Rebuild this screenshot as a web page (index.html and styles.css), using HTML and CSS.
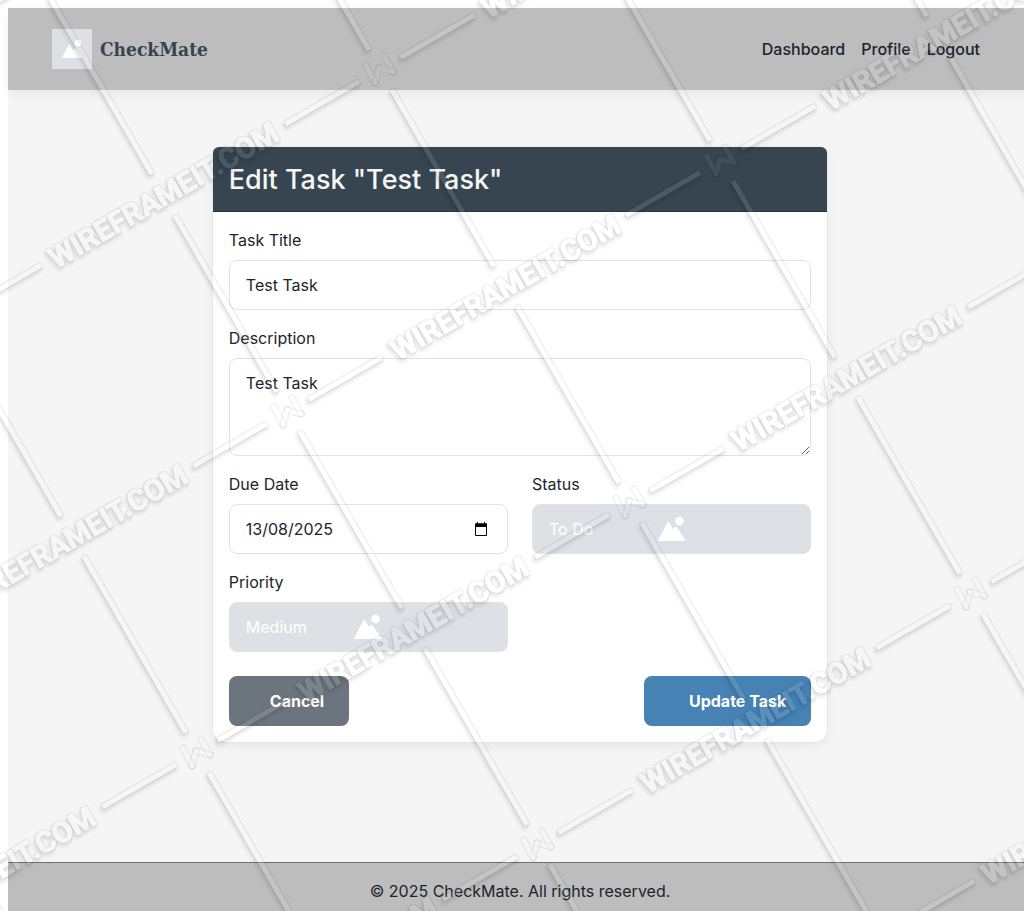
FILE: index.html
```html
<!DOCTYPE html>
<html lang="en">
<head>
<meta charset="utf-8">
<meta name="viewport" content="width=device-width, initial-scale=1">
<title>Edit Task - CheckMate</title>
<link rel="stylesheet" href="styles.css">
</head>
<body>
<div class="app">
  <header class="site-header">
    <div class="container">
      <a class="brand" href="#">
        <svg class="brand-logo" viewBox="0 0 40 40" aria-hidden="true">
          <path d="M10.500 29q-.8 0-.4-.8L16.500 16.500q1-1.800 2 0l3 5 1.200-1.500q1-1 1.800.3L30 28q.5 1-.6 1z" fill="#fff"/>
          <circle cx="26" cy="14" r="3.200" fill="#fff"/>
        </svg>
        <span>CheckMate</span>
      </a>
      <nav class="nav">
        <a href="#">Dashboard</a>
        <a href="#">Profile</a>
        <a href="#">Logout</a>
      </nav>
    </div>
  </header>

  <main class="main">
    <section class="card">
      <h1 class="card-header">Edit Task "Test Task"</h1>
      <form class="card-body">
        <div class="field">
          <label for="title">Task Title</label>
          <input class="control" id="title" type="text" value="Test Task">
        </div>
        <div class="field">
          <label for="description">Description</label>
          <textarea class="control" id="description" rows="3">Test Task</textarea>
        </div>
        <div class="row">
          <div class="field">
            <label for="due">Due Date</label>
            <div class="stack">
              <input class="control" id="due" type="text" inputmode="numeric" value="13/08/2025">
              <svg class="calendar" viewBox="0 0 14 14" aria-hidden="true">
                <path d="M3.500 0v2M10.500 0v2" stroke="#000"/>
                <path d="M1.500 2h11v11.500h-11z" fill="none" stroke="#000"/>
                <path d="M1 1.500h12V5H1z"/>
              </svg>
            </div>
          </div>
          <div class="field">
            <label for="status">Status</label>
            <div class="stack">
              <select class="control select" id="status"><option>To Do</option><option>In Progress</option><option>Done</option></select>
              <svg class="picture" viewBox="0 0 28 26" aria-hidden="true">
                <path d="M1 25q-1.200 0-.6-1.200L9 7.200q1.400-2.400 2.800 0L15 13l1.600-1.800q1.200-1.300 2.300.2l8 12.200q.8 1.400-.7 1.400z"/>
                <circle cx="21.500" cy="5" r="4.200"/>
              </svg>
            </div>
          </div>
          <div class="field">
            <label for="priority">Priority</label>
            <div class="stack">
              <select class="control select" id="priority"><option>Medium</option><option>Low</option><option>High</option></select>
              <svg class="picture" viewBox="0 0 28 26" aria-hidden="true">
                <path d="M1 25q-1.200 0-.6-1.200L9 7.200q1.400-2.400 2.800 0L15 13l1.600-1.800q1.200-1.300 2.300.2l8 12.200q.8 1.400-.7 1.400z"/>
                <circle cx="21.500" cy="5" r="4.200"/>
              </svg>
            </div>
          </div>
        </div>
        <div class="actions">
          <button class="btn btn-cancel" type="button">Cancel</button>
          <button class="btn btn-update" type="submit">Update Task</button>
        </div>
      </form>
    </section>
  </main>

  <footer class="site-footer">© 2025 CheckMate. All rights reserved.</footer>
</div>

<svg class="watermark" aria-hidden="true">
  <defs>
    <filter id="emboss" filterUnits="userSpaceOnUse" x="-20" y="-20" width="3000" height="3000" color-interpolation-filters="sRGB">
      <feMorphology in="SourceAlpha" operator="dilate" radius="1" result="wide"/>
      <feFlood flood-color="#000" flood-opacity=".06"/>
      <feComposite in2="wide" operator="in"/>
      <feComposite in2="SourceAlpha" operator="out" result="ring"/>
      <feOffset in="wide" dx="-1" dy="3" result="moved"/>
      <feGaussianBlur in="moved" stdDeviation="1.500" result="soft"/>
      <feFlood flood-color="#000" flood-opacity=".08"/>
      <feComposite in2="soft" operator="in"/>
      <feComposite in2="SourceAlpha" operator="out" result="shadow"/>
      <feFlood flood-color="#fff" flood-opacity=".11"/>
      <feComposite in2="SourceAlpha" operator="in" result="face"/>
      <feMerge><feMergeNode in="shadow"/><feMergeNode in="ring"/><feMergeNode in="face"/></feMerge>
    </filter>
    <g id="motif">
      <g transform="rotate(-30)" fill="#fff">
        <path d="M24-3h85v5H24zM-109-3h85v5h-85zM-2 23h5v204h-5zM-2-227h5v204h-5z"/>
        <text class="mark-text" x="0" y="261" text-anchor="middle">WIREFRAMEIT.COM</text>
      </g>
    </g>
    <g id="letter" fill="none" stroke="#000" stroke-opacity=".08">
      <rect x="-3" y="-3" width="26" height="6" rx="3" transform="translate(-14 -5) rotate(63)"/>
      <rect x="-3" y="-3" width="22" height="6" rx="3" transform="translate(-5 13) rotate(-75)"/>
      <rect x="-3" y="-3" width="21" height="6" rx="3" transform="translate(-1 -2) rotate(16)"/>
      <rect x="-3" y="-3" width="24" height="6" rx="3" transform="translate(4 -14) rotate(60)"/>
      <path d="M-14-5-5 13-1-2 13 2 4-14" stroke="#fff" stroke-opacity=".06" stroke-width="5" stroke-linecap="round" stroke-linejoin="round"/>
    </g>
  </defs>
  <g filter="url(#emboss)">
    <use href="#motif" x="471" y="-272"/><use href="#motif" x="813" y="-180"/>
    <use href="#motif" x="38" y="-22"/><use href="#motif" x="380" y="70"/><use href="#motif" x="721" y="161"/><use href="#motif" x="1063" y="253"/>
    <use href="#motif" x="-53" y="320"/><use href="#motif" x="288" y="412"/><use href="#motif" x="630" y="503"/><use href="#motif" x="971" y="594"/>
    <use href="#motif" x="-145" y="662"/><use href="#motif" x="197" y="753"/><use href="#motif" x="538" y="845"/><use href="#motif" x="880" y="936"/>
    <use href="#motif" x="105" y="1095"/>
  </g>
  <use href="#letter" x="380" y="70"/><use href="#letter" x="721" y="161"/>
  <use href="#letter" x="288" y="412"/><use href="#letter" x="630" y="503"/><use href="#letter" x="971" y="594"/>
  <use href="#letter" x="197" y="753"/><use href="#letter" x="538" y="845"/>
</svg>
</body>
</html>
```
FILE: styles.css
```css
* { box-sizing: border-box; }

body {
  margin: 0;
  padding: 8px 0 0 8px;
  overflow-x: hidden;
  background: #fff;
  color: #212529;
  font: 16px/24px Inter, sans-serif;
}

.app {
  display: flex;
  flex-direction: column;
  width: 100vw;
  min-height: calc(100vh - 8px);
  background: #f5f5f5;
}

.site-header {
  padding: 21px 0;
  background: #bdbdbd;
  box-shadow: 0 4px 12px rgba(0, 0, 0, .06);
}

.container {
  display: flex;
  align-items: center;
  justify-content: space-between;
  max-width: 960px;
  margin: 0 auto;
  padding: 0 20px 0 12px;
}

.brand {
  display: flex;
  align-items: center;
  gap: 8px;
  color: #36454f;
  font: bold 19px/24px "DejaVu Serif Condensed", "DejaVu Serif", serif;
  text-decoration: none;
}

.brand-logo {
  width: 40px;
  height: 40px;
  background: #dfe0e6;
}

.nav { display: flex; gap: 16px; }

.nav a {
  color: #1a242c;
  font-weight: 500;
  text-decoration: none;
}

.main {
  flex: 1;
  padding: 57px 0 120px;
}

.card {
  width: 60%;
  margin: 0 auto;
  background: #fff;
  border-radius: 6px 6px 12px 12px;
  box-shadow: 0 4px 12px rgba(0, 0, 0, .06), 0 0 1px rgba(0, 0, 0, .2);
}

.card-header {
  margin: 0;
  padding: 16px 16px 14px;
  background: #36454f;
  border-bottom: 1px solid #2b373f;
  border-radius: 6px 6px 0 0;
  color: #f5f5f5;
  font-size: 27px;
  font-weight: 500;
  line-height: 34px;
}

.card-body { padding: 16px; }

.field { margin-bottom: 16px; }

.field label {
  display: block;
  margin-bottom: 8px;
}

.control {
  display: block;
  width: 100%;
  margin: 0;
  padding: 12px 16px;
  border: 1px solid #e2e3e4;
  border-radius: 8px;
  background: #fff;
  color: #212529;
  font: inherit;
}

textarea.control { resize: vertical; }

.row {
  display: grid;
  grid-template-columns: 1fr 1fr;
  column-gap: 24px;
}

.stack { display: grid; align-items: center; }
.stack > * { grid-area: 1 / 1; }

.select {
  appearance: none;
  height: 50px;
  background: #dfe0e6;
  color: #fff;
}

.calendar {
  justify-self: end;
  width: 14px;
  height: 14px;
  margin-right: 20px;
  pointer-events: none;
}

.picture {
  justify-self: center;
  width: 28px;
  height: 26px;
  fill: #fff;
  pointer-events: none;
}

.actions {
  display: flex;
  justify-content: space-between;
  padding-top: 8px;
}

.btn {
  border: 0;
  border-radius: 8px;
  color: #fff;
  font: 700 16px/24px Inter, sans-serif;
}

.btn-cancel { padding: 13px 25px 13px 41px; background: #6c757d; }
.btn-update { padding: 13px 25px 13px 45px; background: #4682b4; }

.site-footer {
  padding: 16px 0 8px;
  border-top: 1px solid #6f7173;
  background: #bdbdbd;
  color: #1a242c;
  text-align: center;
}

.watermark {
  position: fixed;
  inset: 0;
  width: 100%;
  height: 100%;
  pointer-events: none;
}

.mark-text {
  font: 700 29px Roboto, sans-serif;
  stroke: #fff;
  stroke-width: 1px;
}
```
